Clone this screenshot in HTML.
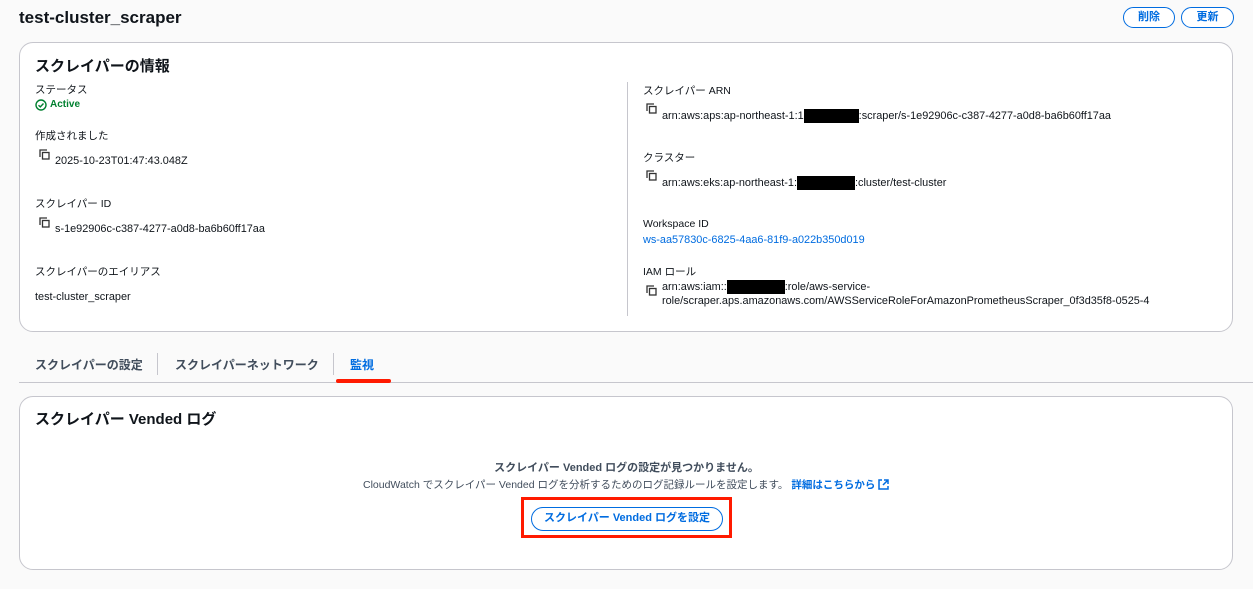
<!DOCTYPE html>
<html><head><meta charset="utf-8"><style>
*{box-sizing:border-box;margin:0;padding:0}
body{width:1253px;height:589px;background:#fafafa;font-family:"Liberation Sans","Noto Sans CJK JP",sans-serif;color:#0f141a;position:relative;overflow:hidden;font-size:11px}
.a{position:absolute;white-space:nowrap}
.panel{position:absolute;left:19px;width:1214px;background:#fff;border:1px solid #c6c6cd;border-radius:14px}
.lbl{font-size:10.5px;color:#0f141a}
.val{font-size:10.9px;color:#0f141a}
.btn{position:absolute;border:1.5px solid #006ce0;border-radius:14px;color:#006ce0;font-weight:bold;font-size:11px;text-align:center;background:#fff}
.red{background:#000;display:inline-block;height:14px;vertical-align:middle}
</style></head><body>
<div class="a" style="left:19px;top:8px;font-size:17px;font-weight:bold">test-cluster_scraper</div>
<div class="btn" style="left:1123px;top:7px;width:52px;height:21px;line-height:18px">削除</div>
<div class="btn" style="left:1181px;top:7px;width:53px;height:21px;line-height:18px">更新</div>

<div class="panel" style="top:42px;height:290px"></div>
<div class="a" style="left:35px;top:55px;font-size:15px;font-weight:bold">スクレイパーの情報</div>
<div class="a lbl" style="left:35px;top:82px">ステータス</div>
<svg class="a" style="left:35px;top:99px" width="12" height="12" viewBox="0 0 12 12"><circle cx="6" cy="6" r="5" fill="none" stroke="#00802f" stroke-width="1.4"/><path d="M3.5 6.2l1.8 1.7 3.2-3.4" fill="none" stroke="#00802f" stroke-width="1.4"/></svg>
<div class="a" style="left:50px;top:99px;font-size:10px;font-weight:bold;color:#00802f">Active</div>
<div class="a lbl" style="left:35px;top:128px">作成されました</div>
<svg class="a" style="left:39px;top:149px" width="11" height="11" viewBox="0 0 11 11"><path d="M1 8V1h7" fill="none" stroke="#333" stroke-width="1.3"/><rect x="3.5" y="3.5" width="6.5" height="6.5" fill="none" stroke="#333" stroke-width="1.3"/></svg>
<div class="a val" style="left:55px;top:155px">2025-10-23T01:47:43.048Z</div>
<div class="a lbl" style="left:35px;top:196px">スクレイパー ID</div>
<svg class="a" style="left:39px;top:217px" width="11" height="11" viewBox="0 0 11 11"><path d="M1 8V1h7" fill="none" stroke="#333" stroke-width="1.3"/><rect x="3.5" y="3.5" width="6.5" height="6.5" fill="none" stroke="#333" stroke-width="1.3"/></svg>
<div class="a val" style="left:55px;top:223px">s-1e92906c-c387-4277-a0d8-ba6b60ff17aa</div>
<div class="a lbl" style="left:35px;top:264px">スクレイパーのエイリアス</div>
<div class="a val" style="left:35px;top:291px">test-cluster_scraper</div>

<div class="a" style="left:627px;top:82px;width:1px;height:234px;background:#c6c6cd"></div>
<div class="a lbl" style="left:643px;top:83px">スクレイパー ARN</div>
<svg class="a" style="left:646px;top:103px" width="11" height="11" viewBox="0 0 11 11"><path d="M1 8V1h7" fill="none" stroke="#333" stroke-width="1.3"/><rect x="3.5" y="3.5" width="6.5" height="6.5" fill="none" stroke="#333" stroke-width="1.3"/></svg>
<div class="a val" style="left:662px;top:109px">arn:aws:aps:ap-northeast-1:1<span class="red" style="width:55px"></span>:scraper/s-1e92906c-c387-4277-a0d8-ba6b60ff17aa</div>
<div class="a lbl" style="left:643px;top:150px">クラスター</div>
<svg class="a" style="left:646px;top:170px" width="11" height="11" viewBox="0 0 11 11"><path d="M1 8V1h7" fill="none" stroke="#333" stroke-width="1.3"/><rect x="3.5" y="3.5" width="6.5" height="6.5" fill="none" stroke="#333" stroke-width="1.3"/></svg>
<div class="a val" style="left:662px;top:176px">arn:aws:eks:ap-northeast-1:<span class="red" style="width:58px"></span>:cluster/test-cluster</div>
<div class="a lbl" style="left:643px;top:218px">Workspace ID</div>
<div class="a val" style="left:643px;top:234px;color:#006ce0">ws-aa57830c-6825-4aa6-81f9-a022b350d019</div>
<div class="a lbl" style="left:643px;top:264px">IAM ロール</div>
<svg class="a" style="left:646px;top:285px" width="11" height="11" viewBox="0 0 11 11"><path d="M1 8V1h7" fill="none" stroke="#333" stroke-width="1.3"/><rect x="3.5" y="3.5" width="6.5" height="6.5" fill="none" stroke="#333" stroke-width="1.3"/></svg>
<div class="a val" style="left:662px;top:280px">arn:aws:iam::<span class="red" style="width:58px"></span>:role/aws-service-</div>
<div class="a val" style="left:662px;top:295px">role/scraper.aps.amazonaws.com/AWSServiceRoleForAmazonPrometheusScraper_0f3d35f8-0525-4</div>

<div class="a" style="left:35px;top:356px;font-size:12px;font-weight:bold;color:#414d5c">スクレイパーの設定</div>
<div class="a" style="left:157px;top:353px;width:1px;height:22px;background:#c6c6cd"></div>
<div class="a" style="left:175px;top:356px;font-size:12px;font-weight:bold;color:#414d5c">スクレイパーネットワーク</div>
<div class="a" style="left:333px;top:353px;width:1px;height:22px;background:#c6c6cd"></div>
<div class="a" style="left:350px;top:356px;font-size:12px;font-weight:bold;color:#006ce0">監視</div>
<div class="a" style="left:19px;top:382px;width:1234px;height:1px;background:#c6c6cd"></div>
<div class="a" style="left:336px;top:379px;width:55px;height:4px;background:#ff1a00;border-radius:2px"></div>

<div class="panel" style="top:396px;height:174px"></div>
<div class="a" style="left:35px;top:408px;font-size:15px;font-weight:bold">スクレイパー Vended ログ</div>
<div class="a" style="left:0;width:1253px;text-align:center;top:459px;font-size:11px;font-weight:bold;color:#414d5c">スクレイパー Vended ログの設定が見つかりません。</div>
<div class="a" style="left:363px;top:477px;font-size:10.5px;color:#414d5c">CloudWatch でスクレイパー Vended ログを分析するためのログ記録ルールを設定します。 <span style="color:#006ce0;font-weight:bold">詳細はこちらから</span></div>
<svg class="a" style="left:878px;top:479px" width="11" height="11" viewBox="0 0 11 11"><path d="M4 1H1v9h9V7M6 1h4v4M10 1L5 6" fill="none" stroke="#006ce0" stroke-width="1.5"/></svg>
<div class="a" style="left:521px;top:497px;width:211px;height:41px;border:3px solid #ff1a00"></div>
<div class="btn" style="left:531px;top:507px;width:192px;height:24px;line-height:21px">スクレイパー Vended ログを設定</div>
</body></html>
